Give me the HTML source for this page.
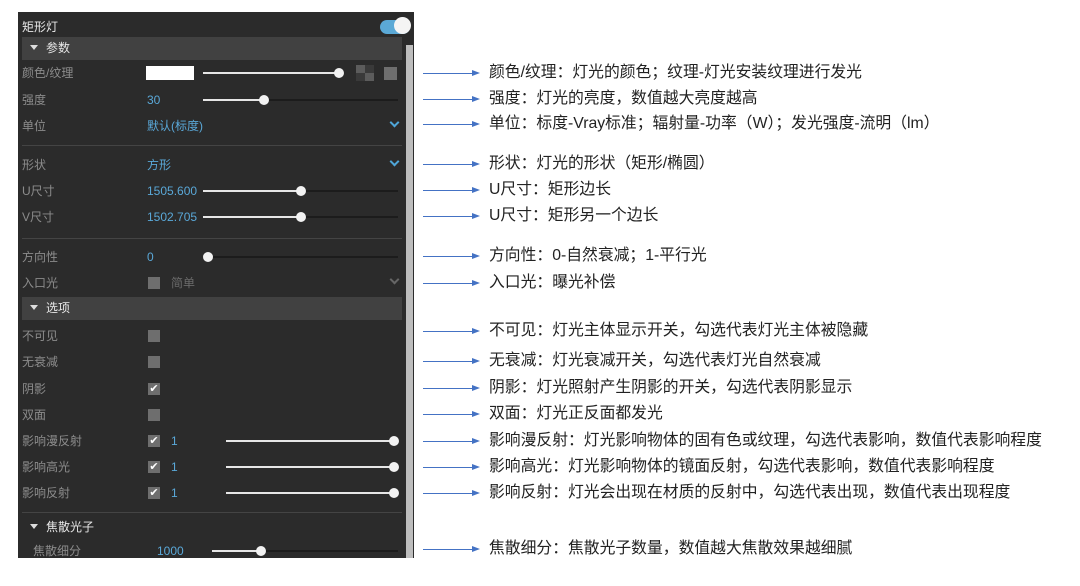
<!DOCTYPE html>
<html><head><meta charset="utf-8"><style>
*{margin:0;padding:0;box-sizing:border-box}
body{width:1080px;height:586px;background:#fff;position:relative;overflow:hidden;font-family:"Liberation Sans","Noto Sans CJK SC",sans-serif}
.p{position:absolute;left:18px;top:12px;width:396px;height:546px;background:#2b2b2b}
.a{position:absolute}
.lb{position:absolute;left:22px;font-size:12px;color:#8c8c8c;line-height:14px;transform:translateY(-7px)}
.v{position:absolute;font-size:12px;color:#5aa8d8;line-height:14px;transform:translateY(-7px)}
.tr{position:absolute;height:2px;background:#1c1c1c}
.tf{position:absolute;height:2px;background:#e6e6e6}
.kn{position:absolute;width:10px;height:10px;border-radius:50%;background:#f2f2f2;transform:translate(-5px,-5px)}
.hd{position:absolute;left:22px;width:380px;height:23px;background:#414141;color:#e8e8e8;font-size:12px;line-height:23px;padding-left:8px}
.hd b{display:inline-block;width:0;height:0;border-left:4px solid transparent;border-right:4px solid transparent;border-top:5px solid #ddd;margin-right:8px;vertical-align:2px}
.sep{position:absolute;left:22px;width:380px;height:1px;background:#444}
.cb{position:absolute;left:148px;width:12px;height:12px;background:#6e6e6e;transform:translateY(-6px);color:#fff;font-size:11px;line-height:12px;text-align:center}
.chev{position:absolute;left:391px;width:7px;height:7px;border-right:2px solid #4fa6d8;border-bottom:2px solid #4fa6d8;transform:translateY(-2px) rotate(45deg)}
.ar{position:absolute;left:423px;width:50px;height:1px;background:#4472c4}
.ar:after{content:"";position:absolute;right:-7px;top:-3px;border-left:8px solid #4472c4;border-top:3.5px solid transparent;border-bottom:3.5px solid transparent}
.t{position:absolute;left:489px;font-size:15.8px;color:#222;line-height:18px;transform:translateY(-9px);white-space:nowrap}
</style></head><body>
<div class="p"></div>
<div class="a" style="left:406px;top:45px;width:7px;height:513px;background:#bdbdbd"></div>
<div class="a" style="left:22px;top:18px;font-size:12px;color:#e8e8e8">矩形灯</div>
<div class="a" style="left:380px;top:20px;width:30px;height:14px;border-radius:7px;background:#5ba9d6"></div>
<div class="a" style="left:394px;top:17px;width:17px;height:17px;border-radius:50%;background:#f4f4f4"></div>
<div class="hd" style="top:37px"><b></b>参数</div>

<div class="lb" style="top:73px">颜色/纹理</div>
<div class="a" style="left:146px;top:66px;width:48px;height:14px;background:#fff"></div>
<div class="tf" style="left:203px;top:72px;width:137px"></div><div class="kn" style="left:339px;top:73px"></div>
<div class="a" style="left:356px;top:65px;width:18px;height:16px;background:#3a3a3a"></div>
<div class="a" style="left:356px;top:65px;width:9px;height:8px;background:#5c5c5c"></div>
<div class="a" style="left:365px;top:73px;width:9px;height:8px;background:#5c5c5c"></div>
<div class="a" style="left:384px;top:67px;width:13px;height:13px;background:#6e6e6e"></div>

<div class="lb" style="top:100px">强度</div><div class="v" style="left:147px;top:100px">30</div>
<div class="tr" style="left:203px;top:99px;width:195px"></div><div class="tf" style="left:203px;top:99px;width:61px"></div><div class="kn" style="left:264px;top:100px"></div>

<div class="lb" style="top:126px">单位</div><div class="v" style="left:147px;top:126px">默认(标度)</div><div class="chev" style="top:121px"></div>
<div class="sep" style="top:145px"></div>
<div class="lb" style="top:165px">形状</div><div class="v" style="left:147px;top:165px">方形</div><div class="chev" style="top:160px"></div>
<div class="lb" style="top:191px">U尺寸</div><div class="v" style="left:147px;top:191px">1505.600</div>
<div class="tr" style="left:203px;top:190px;width:195px"></div><div class="tf" style="left:203px;top:190px;width:98px"></div><div class="kn" style="left:301px;top:191px"></div>
<div class="lb" style="top:217px">V尺寸</div><div class="v" style="left:147px;top:217px">1502.705</div>
<div class="tr" style="left:203px;top:216px;width:195px"></div><div class="tf" style="left:203px;top:216px;width:98px"></div><div class="kn" style="left:301px;top:217px"></div>
<div class="sep" style="top:238px"></div>
<div class="lb" style="top:257px">方向性</div><div class="v" style="left:147px;top:257px">0</div>
<div class="tr" style="left:203px;top:256px;width:195px"></div><div class="kn" style="left:208px;top:257px"></div>
<div class="lb" style="top:283px">入口光</div><div class="cb" style="top:283px"></div>
<div class="v" style="left:171px;top:283px;color:#6a6a6a">简单</div>
<div class="chev" style="top:278px;border-color:#666"></div>
<div class="hd" style="top:297px"><b></b>选项</div>

<div class="lb" style="top:336px">不可见</div><div class="cb" style="top:336px"></div>
<div class="lb" style="top:362px">无衰减</div><div class="cb" style="top:362px"></div>
<div class="lb" style="top:389px">阴影</div><div class="cb" style="top:389px">✔</div>
<div class="lb" style="top:415px">双面</div><div class="cb" style="top:415px"></div>
<div class="lb" style="top:441px">影响漫反射</div><div class="cb" style="top:441px">✔</div><div class="v" style="left:171px;top:441px">1</div>
<div class="tf" style="left:226px;top:440px;width:169px"></div><div class="kn" style="left:394px;top:441px"></div>
<div class="lb" style="top:467px">影响高光</div><div class="cb" style="top:467px">✔</div><div class="v" style="left:171px;top:467px">1</div>
<div class="tf" style="left:226px;top:466px;width:169px"></div><div class="kn" style="left:394px;top:467px"></div>
<div class="lb" style="top:493px">影响反射</div><div class="cb" style="top:493px">✔</div><div class="v" style="left:171px;top:493px">1</div>
<div class="tf" style="left:226px;top:492px;width:169px"></div><div class="kn" style="left:394px;top:493px"></div>
<div class="sep" style="top:512px"></div>
<div class="a" style="left:30px;top:518px;font-size:12px;color:#e8e8e8"><span style="display:inline-block;border-left:4px solid transparent;border-right:4px solid transparent;border-top:5px solid #ddd;margin-right:8px;vertical-align:2px"></span>焦散光子</div>
<div class="lb" style="left:33px;top:551px">焦散细分</div><div class="v" style="left:157px;top:551px">1000</div>
<div class="tr" style="left:212px;top:550px;width:186px"></div><div class="tf" style="left:212px;top:550px;width:49px"></div><div class="kn" style="left:261px;top:551px"></div>

<div class="ar" style="top:73px"></div><div class="t" style="top:73px">颜色/纹理：灯光的颜色；纹理-灯光安装纹理进行发光</div>
<div class="ar" style="top:99px"></div><div class="t" style="top:99px">强度：灯光的亮度，数值越大亮度越高</div>
<div class="ar" style="top:124px"></div><div class="t" style="top:124px">单位：标度-Vray标准；辐射量-功率（W）；发光强度-流明（lm）</div>
<div class="ar" style="top:164px"></div><div class="t" style="top:164px">形状：灯光的形状（矩形/椭圆）</div>
<div class="ar" style="top:190px"></div><div class="t" style="top:190px">U尺寸：矩形边长</div>
<div class="ar" style="top:216px"></div><div class="t" style="top:216px">U尺寸：矩形另一个边长</div>
<div class="ar" style="top:256px"></div><div class="t" style="top:256px">方向性：0-自然衰减；1-平行光</div>
<div class="ar" style="top:283px"></div><div class="t" style="top:283px">入口光：曝光补偿</div>
<div class="ar" style="top:331px"></div><div class="t" style="top:331px">不可见：灯光主体显示开关，勾选代表灯光主体被隐藏</div>
<div class="ar" style="top:361px"></div><div class="t" style="top:361px">无衰减：灯光衰减开关，勾选代表灯光自然衰减</div>
<div class="ar" style="top:388px"></div><div class="t" style="top:388px">阴影：灯光照射产生阴影的开关，勾选代表阴影显示</div>
<div class="ar" style="top:414px"></div><div class="t" style="top:414px">双面：灯光正反面都发光</div>
<div class="ar" style="top:441px"></div><div class="t" style="top:441px">影响漫反射：灯光影响物体的固有色或纹理，勾选代表影响，数值代表影响程度</div>
<div class="ar" style="top:467px"></div><div class="t" style="top:467px">影响高光：灯光影响物体的镜面反射，勾选代表影响，数值代表影响程度</div>
<div class="ar" style="top:493px"></div><div class="t" style="top:493px">影响反射：灯光会出现在材质的反射中，勾选代表出现，数值代表出现程度</div>
<div class="ar" style="top:549px"></div><div class="t" style="top:549px">焦散细分：焦散光子数量，数值越大焦散效果越细腻</div>
</body></html>
